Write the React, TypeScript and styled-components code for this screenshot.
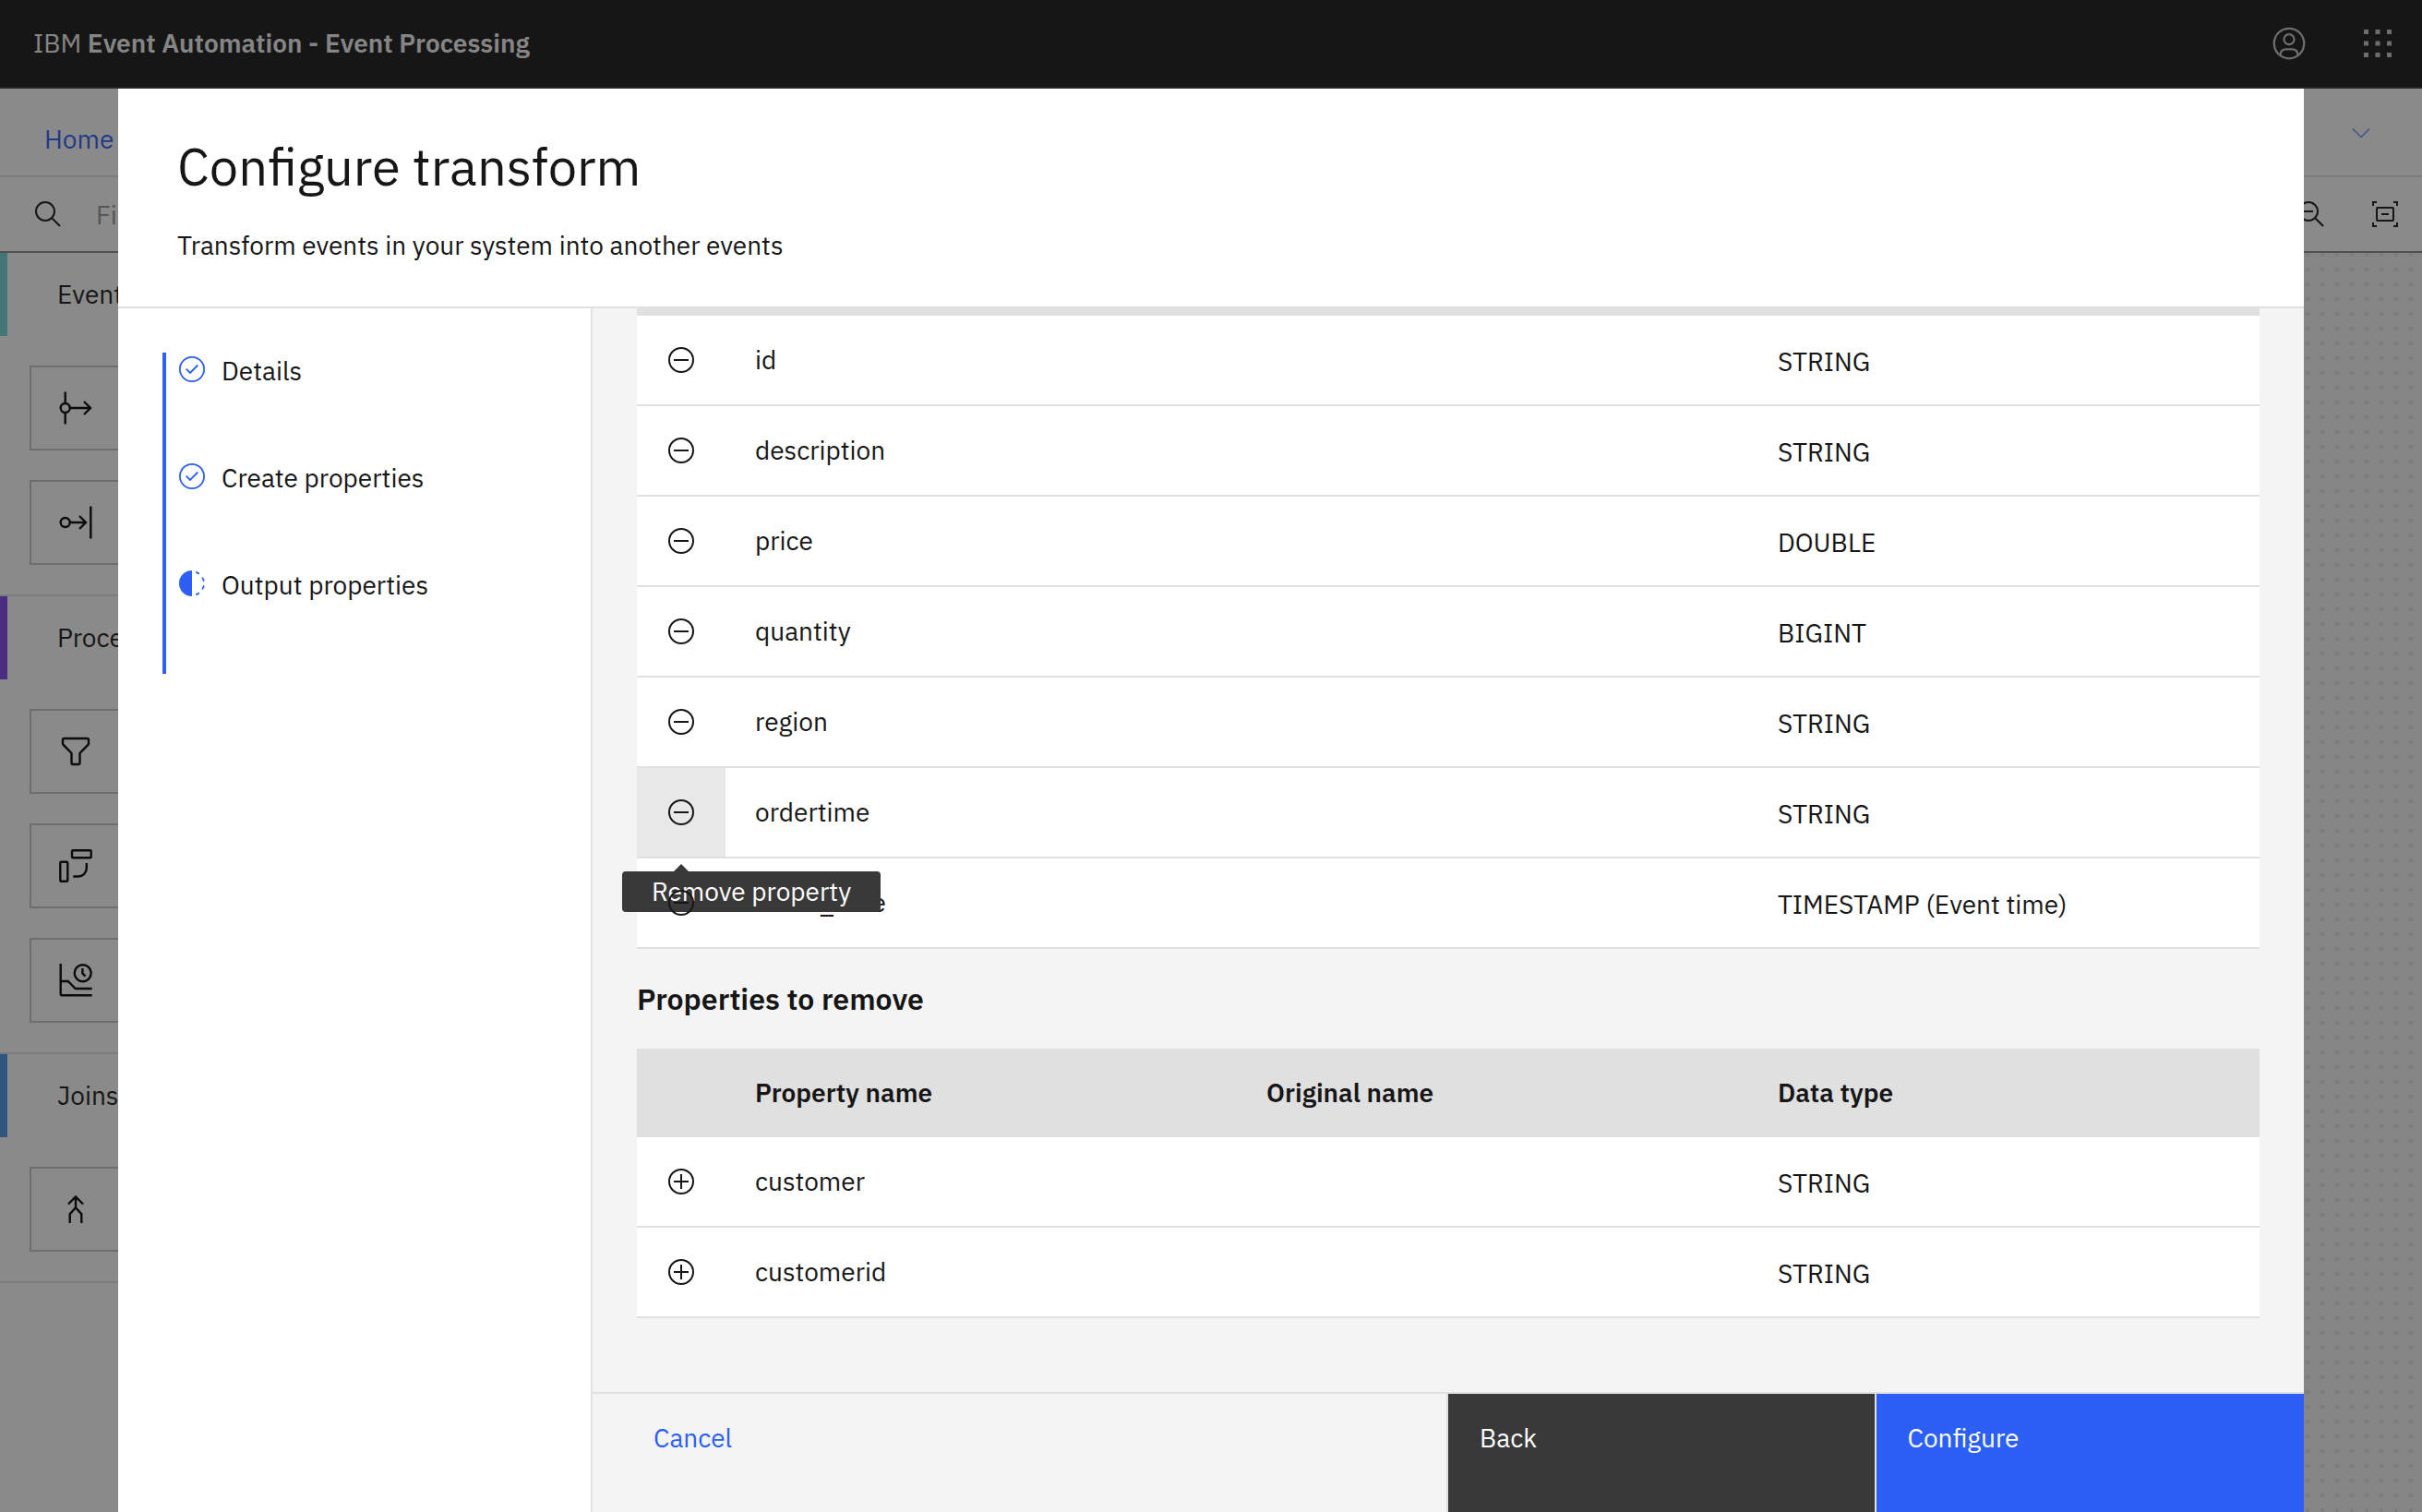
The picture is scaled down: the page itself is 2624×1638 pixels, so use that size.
import React from "react";
import styled, { createGlobalStyle } from "styled-components";

const font = `"IBM Plex Sans", Roboto, "Liberation Sans", sans-serif`;

const color = {
  ink: "#161616",
  white: "#ffffff",
  layer: "#f4f4f4",
  border: "#e0e0e0",
  strong: "#8d8d8d",
  placeholder: "#949494",
  blue: "#2b5ff5",
  dark: "#393939",
  hover: "#e8e8e8",
};

const GlobalStyle = createGlobalStyle`
  *, *::before, *::after { box-sizing: border-box; }
  body { margin: 0; background: ${color.layer}; overflow: hidden; }
  body, button, input, table {
    font-family: ${font};
    font-size: 28px;
    line-height: 36px;
    color: ${color.ink};
  }
  button { margin: 0; padding: 0; border: 0; background: none; cursor: pointer; }
  h1, h2, p, ul, ol { margin: 0; padding: 0; }
  ul, ol { list-style: none; }
  svg { display: block; flex: none; }
`;

/* ---------- page behind the dialog ---------- */

const Page = styled.div`
  display: flex;
  flex-direction: column;
  height: 100vh;
  overflow: hidden;
`;

const Header = styled.header`
  display: flex;
  align-items: center;
  flex: none;
  height: 96px;
  padding-left: 36px;
  background: ${color.ink};
  border-bottom: 2px solid ${color.dark};
  color: ${color.layer};
`;

const Brand = styled.span`
  flex: 1;
  font-weight: 400;
  strong { font-weight: 600; }
`;

const HeaderButton = styled.button`
  display: flex;
  align-items: center;
  justify-content: center;
  width: 96px;
  height: 96px;
  color: #c6c6c6;
`;

const Crumbs = styled.nav`
  display: flex;
  align-items: center;
  justify-content: space-between;
  flex: none;
  height: 96px;
  padding: 16px 50px 0 48px;
  background: ${color.white};
  border-bottom: 2px solid ${color.border};
`;

const CrumbLink = styled.a`
  color: ${color.blue};
  text-decoration: none;
`;

const CollapseButton = styled.button`
  align-self: flex-start;
  padding: 16px 0;
  color: #84a4ff;
`;

const Toolbar = styled.div`
  display: flex;
  align-items: center;
  flex: none;
  height: 82px;
  background: ${color.white};
  border-bottom: 2px solid ${color.strong};
`;

const SearchLabel = styled.label`
  display: flex;
  align-items: center;
  gap: 36px;
  flex: 1;
  padding-left: 36px;
`;

const SearchInput = styled.input`
  flex: 1;
  padding: 2px 0 0;
  border: 0;
  outline: 0;
  background: transparent;
  &::placeholder { color: ${color.placeholder}; opacity: 1; }
`;

const ToolButton = styled.button`
  padding: 24px;
`;

const Workspace = styled.div`
  display: flex;
  flex: 1;
  min-height: 0;
`;

const Palette = styled.aside`
  width: 512px;
  flex: none;
  background: ${color.white};
`;

const Canvas = styled.main`
  flex: 1;
  background-color: ${color.layer};
  background-image: radial-gradient(circle at 4px 2px, ${color.border} 2px, transparent 2px);
  background-size: 16px 16px;
`;

const Group = styled.section`
  border-bottom: 2px solid ${color.border};
`;

const GroupTitle = styled.h2<{ $accent: string }>`
  display: flex;
  align-items: center;
  height: 90px;
  padding-left: 54px;
  border-left: 8px solid ${(p) => p.$accent};
  font-size: 28px;
  font-weight: 400;
`;

const CardList = styled.ul`
  display: flex;
  flex-direction: column;
  gap: 32px;
  padding: 32px;
`;

const Card = styled.li`
  display: flex;
  align-items: center;
  gap: 28px;
  height: 92px;
  padding-left: 28px;
  border: 2px solid #c6c6c6;
  color: #000000;
`;

/* ---------- dialog ---------- */

const Overlay = styled.div`
  position: fixed;
  inset: 0;
  display: flex;
  padding: 96px 128px 0;
  background: rgba(22, 22, 22, 0.5);
`;

const Dialog = styled.div`
  display: flex;
  flex-direction: column;
  flex: 1;
  min-width: 0;
  background: ${color.white};
`;

const DialogHeader = styled.header`
  flex: none;
  height: 238px;
  padding: 46px 64px 0;
  border-bottom: 2px solid ${color.border};
`;

const DialogTitle = styled.h1`
  margin-bottom: 30px;
  font-size: 56px;
  line-height: 76px;
  font-weight: 400;
`;

const DialogBody = styled.div`
  display: flex;
  flex: 1;
  min-height: 0;
`;

const Influencer = styled.aside`
  flex: none;
  width: 514px;
  padding: 48px;
  border-right: 2px solid ${color.border};
`;

const Steps = styled.ol`
  border-left: 4px solid ${color.blue};
`;

const Step = styled.li`
  display: flex;
  align-items: flex-start;
  gap: 16px;
  height: 116px;
  padding: 2px 0 0 12px;
  svg { color: ${color.blue}; }
`;

const Main = styled.div`
  display: flex;
  flex-direction: column;
  flex: 1;
  min-width: 0;
  background: ${color.layer};
`;

const Content = styled.div`
  display: flex;
  flex-direction: column;
  justify-content: flex-end;
  flex: 1;
  min-height: 0;
  padding: 0 48px 80px;
  overflow: hidden;
`;

const SectionTitle = styled.h2`
  padding: 34px 0;
  font-size: 32px;
  line-height: 40px;
  font-weight: 600;
`;

const Table = styled.table`
  width: 100%;
  border-collapse: separate;
  border-spacing: 0;
  table-layout: fixed;
`;

const ActionCol = styled.col`
  width: 96px;
`;

const HeadCell = styled.th`
  height: 96px;
  padding: 0 32px;
  background: ${color.border};
  text-align: left;
  font-weight: 600;
`;

const Cell = styled.td`
  height: 98px;
  padding: 0 32px;
  background: ${color.white};
  border-bottom: 2px solid ${color.border};
`;

const TypeCell = styled(Cell)`
  padding-top: 4px;
`;

const ActionCell = styled(Cell)`
  padding: 0;
`;

const ActionWrap = styled.div`
  position: relative;
`;

const ActionButton = styled.button<{ $active?: boolean }>`
  display: flex;
  align-items: center;
  justify-content: center;
  width: 96px;
  height: 96px;
  background: ${(p) => (p.$active ? color.hover : "transparent")};
  svg { position: relative; z-index: 2; }
`;

const Tooltip = styled.span`
  position: absolute;
  z-index: 1;
  top: 112px;
  left: -16px;
  padding: 4px 32px;
  border-radius: 4px;
  background: ${color.dark};
  color: ${color.white};
  white-space: nowrap;
  &::before {
    content: "";
    position: absolute;
    left: 56px;
    bottom: 100%;
    border: 8px solid transparent;
    border-top-width: 0;
    border-bottom-color: ${color.dark};
  }
`;

const Footer = styled.footer`
  display: grid;
  grid-template-columns: 2fr 1fr 1fr;
  flex: none;
  height: 130px;
  border-top: 2px solid ${color.border};
`;

const FooterButton = styled.button<{ $kind: "ghost" | "secondary" | "primary" }>`
  display: flex;
  align-items: flex-start;
  padding: 30px ${(p) => (p.$kind === "ghost" ? 66 : 34)}px;
  color: ${(p) => (p.$kind === "ghost" ? color.blue : color.white)};
  background: ${(p) =>
    ({ ghost: "transparent", secondary: color.dark, primary: color.blue })[p.$kind]};
  box-shadow: ${(p) => (p.$kind === "ghost" ? "none" : `-2px 0 0 ${color.border}`)};
`;

/* ---------- icons ---------- */

type IconProps = { size?: number; box?: number; width?: number; children: React.ReactNode };

const Icon = ({ size = 32, box = 32, width = 2, children }: IconProps) => (
  <svg
    width={size}
    height={size}
    viewBox={`0 0 ${box} ${box}`}
    fill="none"
    stroke="currentColor"
    strokeWidth={width}
    aria-hidden="true"
  >
    {children}
  </svg>
);

const CardIcon = ({ children }: { children: React.ReactNode }) => (
  <Icon size={40} box={40} width={2.4}>{children}</Icon>
);

const UserIcon = () => (
  <Icon size={40} width={1.8}>
    <circle cx="16" cy="16" r="13" />
    <circle cx="16" cy="12.500" r="4.400" />
    <path d="M8.500 26.500V25.500a4.500 4.500 0 0 1 4.500-4.500h6a4.500 4.500 0 0 1 4.500 4.500v1" />
  </Icon>
);

const SwitcherIcon = () => (
  <Icon size={40}>
    <g fill="currentColor" stroke="none">
      {[4, 14, 24].map((y) =>
        [4, 14, 24].map((x) => <rect key={`${x}-${y}`} x={x} y={y} width="4" height="4" />)
      )}
    </g>
  </Icon>
);

const ChevronIcon = () => (
  <Icon width={1.8}>
    <path d="M6.800 11.300 16 20.500l9.200-9.200" />
  </Icon>
);

const SearchIcon = () => (
  <Icon>
    <circle cx="13" cy="13" r="10" />
    <path d="M20.500 20.500 29 29" />
  </Icon>
);

const ZoomOutIcon = () => (
  <Icon>
    <circle cx="13" cy="13" r="10" />
    <path d="M20.500 20.500 29 29M8 13h10" />
  </Icon>
);

const FitIcon = () => (
  <Icon>
    <rect x="7" y="9" width="18" height="14" rx="1" />
    <path d="M12 16h8M3 7V3h4M25 3h4v4M29 25v4h-4M7 29H3v-4" />
  </Icon>
);

const SourceIcon = () => (
  <CardIcon>
    <circle cx="8.700" cy="20" r="5" />
    <path d="M8.700 2.500V15M8.700 25v12.500M14 20h22M29 13l7 7-7 7" />
  </CardIcon>
);

const SinkIcon = () => (
  <CardIcon>
    <circle cx="8.700" cy="20" r="5" />
    <path d="M14 20h17M24 13l7 7-7 7M36.300 2.500v35" />
  </CardIcon>
);

const FilterIcon = () => (
  <CardIcon>
    <path d="M7.500 6h25A1.500 1.500 0 0 1 34 7.500V12.200L24.500 22v10.500a1.500 1.500 0 0 1-1.500 1.500h-6a1.500 1.500 0 0 1-1.500-1.500V22L6 12.200V7.500A1.500 1.500 0 0 1 7.500 6Z" />
  </CardIcon>
);

const TransformIcon = () => (
  <CardIcon>
    <rect x="16" y="3.300" width="20.700" height="8" rx="1" />
    <rect x="3.300" y="15.700" width="8" height="21" rx="1" />
    <path d="M31.800 17v5.500a9 9 0 0 1-9 9h-5.500" />
  </CardIcon>
);

const AggregateIcon = () => (
  <CardIcon>
    <path d="M3.700 2v33.300a1 1 0 0 0 1 1h33M3.700 21h8l8 8h18M27.400 7v5.500l3.200 3.200" />
    <circle cx="27.700" cy="12.300" r="9" />
  </CardIcon>
);

const JoinIcon = () => (
  <CardIcon>
    <path d="M12 14.500 20 6.500l8 8M20 6.500v12M13.700 35v-9.700l6.300-7 6.300 7V35" />
  </CardIcon>
);

const DoneIcon = () => (
  <Icon width={1.8}>
    <circle cx="16" cy="16" r="13.100" />
    <path d="M9.700 15.700 14 20l8.300-8.500" />
  </Icon>
);

const CurrentIcon = () => (
  <Icon width={1.8}>
    <path d="M16 2a14 14 0 0 0 0 28z" fill="currentColor" stroke="none" />
    <path d="M20.300 3.600 23.800 5.600M27.200 9.500 29 13.700M29 18.300 27.200 22.500M23.800 26.400 20.300 28.400" />
  </Icon>
);

const RemoveIcon = () => (
  <Icon>
    <circle cx="16" cy="16" r="13" />
    <path d="M8 16h16" />
  </Icon>
);

const AddIcon = () => (
  <Icon>
    <circle cx="16" cy="16" r="13" />
    <path d="M8 16h16M16 8v16" />
  </Icon>
);

/* ---------- data ---------- */

const groups = [
  { title: "Events", accent: "#70d8d8", icons: [SourceIcon, SinkIcon] },
  { title: "Processors", accent: "#8044ee", icons: [FilterIcon, TransformIcon, AggregateIcon] },
  { title: "Joins", accent: "#4892e4", icons: [JoinIcon] },
];

const steps = [
  { label: "Details", done: true },
  { label: "Create properties", done: true },
  { label: "Output properties", done: false },
];

const columns = ["Property name", "Original name", "Data type"];

const kept = [
  { name: "id", type: "STRING" },
  { name: "description", type: "STRING" },
  { name: "price", type: "DOUBLE" },
  { name: "quantity", type: "BIGINT" },
  { name: "region", type: "STRING" },
  { name: "ordertime", type: "STRING" },
  { name: "event_time", type: "TIMESTAMP (Event time)" },
];

const removed = [
  { name: "customer", type: "STRING" },
  { name: "customerid", type: "STRING" },
];

type PropertyTableProps = {
  rows: { name: string; type: string }[];
  action: "Remove property" | "Add property";
  active?: string;
  blankHead?: boolean;
};

const PropertyTable = ({ rows, action, active, blankHead }: PropertyTableProps) => (
  <Table>
    <colgroup>
      <ActionCol />
      <col />
      <col />
      <col />
    </colgroup>
    <thead>
      <tr>
        <HeadCell />
        {columns.map((column) => (
          <HeadCell key={column} scope="col" aria-label={column}>
            {blankHead ? null : column}
          </HeadCell>
        ))}
      </tr>
    </thead>
    <tbody>
      {rows.map((row) => (
        <tr key={row.name}>
          <ActionCell>
            <ActionWrap>
              <ActionButton aria-label={action} $active={row.name === active}>
                {action === "Add property" ? <AddIcon /> : <RemoveIcon />}
              </ActionButton>
              {row.name === active && <Tooltip role="tooltip">{action}</Tooltip>}
            </ActionWrap>
          </ActionCell>
          <Cell>{row.name}</Cell>
          <Cell />
          <TypeCell>{row.type}</TypeCell>
        </tr>
      ))}
    </tbody>
  </Table>
);

export default function App() {
  return (
    <>
      <GlobalStyle />
      <Page>
        <Header>
          <Brand>
            IBM <strong>Event Automation - Event Processing</strong>
          </Brand>
          <HeaderButton aria-label="User"><UserIcon /></HeaderButton>
          <HeaderButton aria-label="Switcher"><SwitcherIcon /></HeaderButton>
        </Header>
        <Crumbs>
          <CrumbLink href="#">Home</CrumbLink>
          <CollapseButton aria-label="Expand"><ChevronIcon /></CollapseButton>
        </Crumbs>
        <Toolbar>
          <SearchLabel>
            <SearchIcon />
            <SearchInput type="search" placeholder="Find" aria-label="Find" />
          </SearchLabel>
          <ToolButton aria-label="Zoom out"><ZoomOutIcon /></ToolButton>
          <ToolButton aria-label="Fit to screen"><FitIcon /></ToolButton>
        </Toolbar>
        <Workspace>
          <Palette>
            {groups.map((group) => (
              <Group key={group.title}>
                <GroupTitle $accent={group.accent}>{group.title}</GroupTitle>
                <CardList>
                  {group.icons.map((Glyph, i) => (
                    <Card key={i}><Glyph /></Card>
                  ))}
                </CardList>
              </Group>
            ))}
          </Palette>
          <Canvas />
        </Workspace>
      </Page>
      <Overlay>
        <Dialog role="dialog" aria-labelledby="dialog-title">
          <DialogHeader>
            <DialogTitle id="dialog-title">Configure transform</DialogTitle>
            <p>Transform events in your system into another events</p>
          </DialogHeader>
          <DialogBody>
            <Influencer>
              <Steps>
                {steps.map((step) => (
                  <Step key={step.label}>
                    {step.done ? <DoneIcon /> : <CurrentIcon />}
                    <span>{step.label}</span>
                  </Step>
                ))}
              </Steps>
            </Influencer>
            <Main>
              <Content>
                <PropertyTable rows={kept} action="Remove property" active="ordertime" blankHead />
                <SectionTitle>Properties to remove</SectionTitle>
                <PropertyTable rows={removed} action="Add property" />
              </Content>
              <Footer>
                <FooterButton $kind="ghost">Cancel</FooterButton>
                <FooterButton $kind="secondary">Back</FooterButton>
                <FooterButton $kind="primary">Configure</FooterButton>
              </Footer>
            </Main>
          </DialogBody>
        </Dialog>
      </Overlay>
    </>
  );
}
